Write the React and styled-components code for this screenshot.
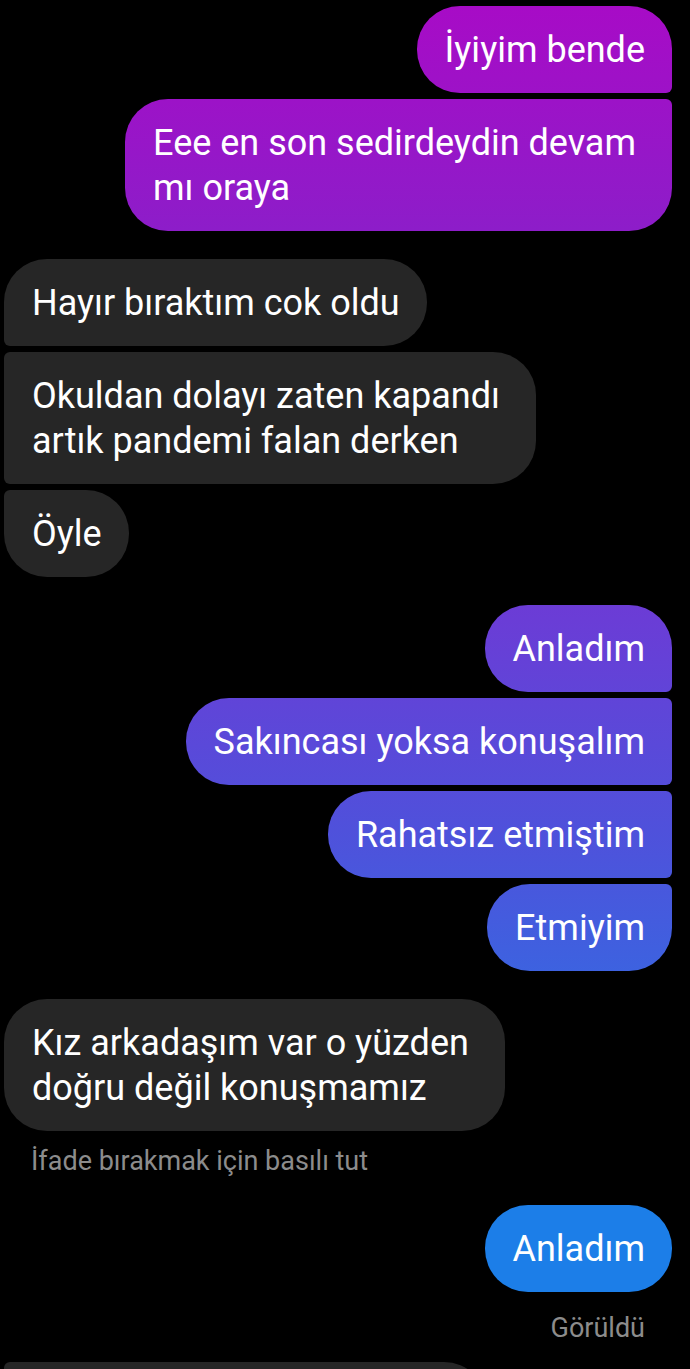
import React from 'react';
import styled, { createGlobalStyle, css } from 'styled-components';

const GlobalStyle = createGlobalStyle`
  html, body {
    margin: 0;
    padding: 0;
    background: #000;
  }
  body {
    font-family: Roboto, "Noto Sans", "Liberation Sans", sans-serif;
    -webkit-font-smoothing: antialiased;
  }
`;

const BIG = 43;
const SMALL = 6;

// corner shapes for a bubble depending on where it sits in its group
const radius = (side, pos) => {
  if (pos === 'single') return `${BIG}px`;
  const tail = {
    first: [BIG, SMALL],
    middle: [SMALL, SMALL],
    last: [SMALL, BIG],
  }[pos];
  // order: top-left, top-right, bottom-right, bottom-left
  return side === 'out'
    ? `${BIG}px ${tail[0]}px ${tail[1]}px ${BIG}px`
    : `${tail[0]}px ${BIG}px ${BIG}px ${tail[1]}px`;
};

const tones = {
  gradient: css`
    background: linear-gradient(
      to bottom,
      #a80bc6 0px,
      #8d1dc9 230px,
      #6a3dd6 620px,
      #4f51db 830px,
      #3c63e0 980px
    );
    background-attachment: fixed;
  `,
  blue: css`
    background: #1c7ee8;
  `,
  gray: css`
    background: #262626;
  `,
};

const Screen = styled.div`
  height: 1369px;
  overflow: hidden;
  padding-top: 6px;
  box-sizing: border-box;
  display: flex;
  flex-direction: column;
`;

const Group = styled.div`
  display: flex;
  flex-direction: column;
  gap: 6px;
  align-items: ${(p) => (p.$side === 'out' ? 'flex-end' : 'flex-start')};
  padding: ${(p) => (p.$side === 'out' ? '0 18px 0 0' : '0 0 0 4px')};
  margin-bottom: ${(p) => p.$after ?? 28}px;
`;

const Bubble = styled.div`
  box-sizing: border-box;
  width: ${(p) => (p.$width ? `${p.$width}px` : 'fit-content')};
  min-height: 87px;
  padding: 22px ${(p) => (p.$wide ? 36 : 27)}px 20px 28px;
  color: #fff;
  font-size: 36px;
  line-height: 45px;
  white-space: nowrap;
  border-radius: ${(p) => radius(p.$side, p.$pos)};
  ${(p) => tones[p.$tone]}
`;

const Hint = styled.div`
  color: #8c8c8c;
  font-size: 27px;
  line-height: 30px;
  padding: ${(p) => (p.$align === 'right' ? '0 45px 0 0' : '0 0 0 31px')};
  text-align: ${(p) => p.$align || 'left'};
  margin-bottom: ${(p) => p.$after ?? 0}px;
`;

const Lines = ({ lines }) =>
  lines.map((l, i) => (
    <React.Fragment key={i}>
      {i > 0 && <br />}
      {l}
    </React.Fragment>
  ));

const thread = [
  {
    side: 'out',
    tone: 'gradient',
    msgs: [['İyiyim bende'], ['Eee en son sedirdeydin devam', 'mı oraya']],
  },
  {
    side: 'in',
    tone: 'gray',
    msgs: [
      ['Hayır bıraktım cok oldu'],
      ['Okuldan dolayı zaten kapandı', 'artık pandemi falan derken'],
      ['Öyle'],
    ],
  },
  {
    side: 'out',
    tone: 'gradient',
    msgs: [['Anladım'], ['Sakıncası yoksa konuşalım'], ['Rahatsız etmiştim'], ['Etmiyim']],
  },
];

const position = (i, n) => {
  if (n === 1) return 'single';
  if (i === 0) return 'first';
  if (i === n - 1) return 'last';
  return 'middle';
};

export default function App() {
  return (
    <>
      <GlobalStyle />
      <Screen>
        {thread.map((g, gi) => (
          <Group key={gi} $side={g.side}>
            {g.msgs.map((lines, i) => (
              <Bubble
                key={i}
                $side={g.side}
                $tone={g.tone}
                $pos={position(i, g.msgs.length)}
                $wide={lines.length > 1}
              >
                <Lines lines={lines} />
              </Bubble>
            ))}
          </Group>
        ))}

        <Group $side="in" $after={15}>
          <Bubble $side="in" $tone="gray" $pos="single" $wide>
            <Lines lines={['Kız arkadaşım var o yüzden', 'doğru değil konuşmamız']} />
          </Bubble>
        </Group>
        <Hint $after={29}>İfade bırakmak için basılı tut</Hint>

        <Group $side="out" $after={21}>
          <Bubble $side="out" $tone="blue" $pos="single">
            Anladım
          </Bubble>
        </Group>
        <Hint $align="right" $after={19}>
          Görüldü
        </Hint>

        {/* next incoming message, cut off by the bottom of the screen */}
        <Group $side="in">
          <Bubble $side="in" $tone="gray" $pos="last" $width={483} />
        </Group>
      </Screen>
    </>
  );
}
